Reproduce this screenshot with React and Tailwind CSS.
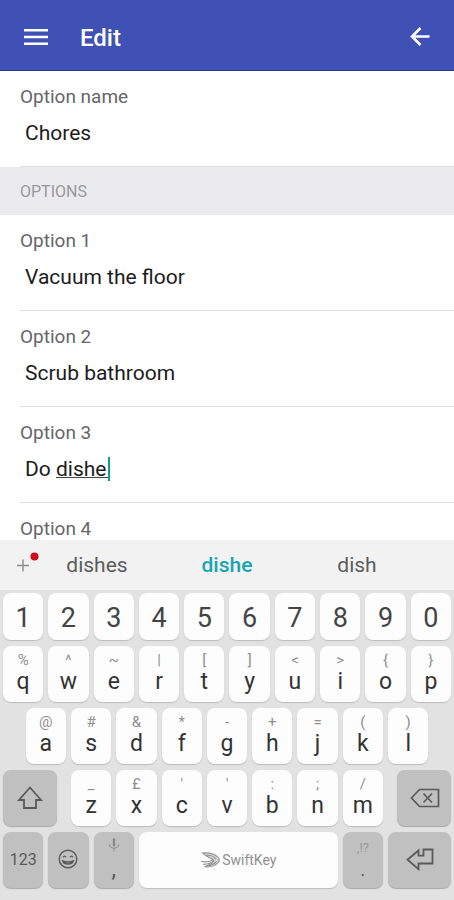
import { useState } from "react";
import clsx from "clsx";

const numberRow = ["1", "2", "3", "4", "5", "6", "7", "8", "9", "0"];

const topRow = [
  ["q", "%"],
  ["w", "^"],
  ["e", "~"],
  ["r", "|"],
  ["t", "["],
  ["y", "]"],
  ["u", "<"],
  ["i", ">"],
  ["o", "{"],
  ["p", "}"],
];

const homeRow = [
  ["a", "@"],
  ["s", "#"],
  ["d", "&"],
  ["f", "*"],
  ["g", "-"],
  ["h", "+"],
  ["j", "="],
  ["k", "("],
  ["l", ")"],
];

const bottomRow = [
  ["z", "_"],
  ["x", "£"],
  ["c", "'"],
  ["v", "'"],
  ["b", ":"],
  ["n", ";"],
  ["m", "/"],
];

function MenuIcon() {
  return (
    <svg className="h-6 w-6" viewBox="0 0 24 24" fill="currentColor">
      <path d="M0 4h24v2.4H0zM0 10.8h24v2.4H0zM0 17.6h24V20H0z" />
    </svg>
  );
}

function BackIcon() {
  return (
    <svg className="h-5 w-5" viewBox="0 0 20 20" fill="none" stroke="currentColor" strokeWidth="2.6">
      <path d="M19.5 9.5H2.5M10.5 1L2 9.5l8.5 8.5" />
    </svg>
  );
}

function ShiftIcon() {
  return (
    <svg className="h-6 w-7" viewBox="0 0 28 24" fill="none" stroke="currentColor" strokeWidth="1.8">
      <path d="M14 1.5L25 14h-5v8H8v-8H3z" />
    </svg>
  );
}

function BackspaceIcon() {
  return (
    <svg className="h-5 w-8" viewBox="0 0 32 20" fill="none" stroke="currentColor" strokeWidth="1.7">
      <path d="M11.5 1.5H30.5V18.5H11.5L3.5 10zM15.5 5.5l8.5 9M24 5.5l-8.5 9" />
    </svg>
  );
}

function EnterIcon() {
  return (
    <svg className="h-6 w-8" viewBox="0 0 32 24" fill="none" stroke="currentColor" strokeWidth="1.8">
      <path d="M3.5 12.8L14.5 3.5v5.2h5V2.5h9v14h-14v5.7z" />
    </svg>
  );
}

function SmileIcon() {
  return (
    <svg className="h-5 w-5" viewBox="0 0 20 20" fill="none" stroke="currentColor" strokeWidth="1.4">
      <circle cx="10" cy="10" r="8.8" />
      <path d="M5.2 8.2c.4-1.5 2.2-1.5 2.6 0M12.2 8.2c.4-1.5 2.2-1.5 2.6 0M4.8 12c2.6 1.3 7.8 1.3 10.4 0-1 4-9.4 4-10.4 0z" />
    </svg>
  );
}

function MicIcon() {
  return (
    <svg className="h-3.5 w-3" viewBox="0 0 12 14" fill="none" stroke="currentColor">
      <path d="M6 1.2v6" strokeWidth="2.4" strokeLinecap="round" />
      <path d="M1.2 6.4c.4 5 9.2 5 9.6 0M6 10.4V13.4" />
    </svg>
  );
}

function SwiftKeyLogo() {
  return (
    <svg className="h-4 w-5" viewBox="0 0 20 16" fill="none" stroke="currentColor" strokeWidth="1.1">
      <path
        d="M2.5 1C9 .5 15 2 18.2 5.5c1.4 1.7 1.4 3.3 0 5C15 14 9.5 15.3 4.5 14.8 9 13.5 12.5 11.5 13.500 8 10 5.5 5.5 4.5 2.5 1z"
        fill="currentColor"
        fillOpacity="0.3"
      />
      <path d="M6 3.3c5-.3 8.5 1.2 10.3 4.2M1 9.500c4 .8 8 .4 11.500-1.5M3 12.2c5 .3 8.500-1 11-3.500M8 13.8c4-.6 6.500-2 8.500-4.500" />
    </svg>
  );
}

function Field({ id, label, value, composing }) {
  const [text, setText] = useState(value);

  return (
    <div className="ml-5 border-b border-[#e0e0e2] pt-3.5 pb-[9px]">
      <label htmlFor={id} className="block text-[19px] leading-6 text-[#666]">
        {label}
      </label>
      <div className="relative">
        <input
          id={id}
          type="text"
          value={text}
          onChange={(e) => setText(e.target.value)}
          className="block h-12 w-full bg-transparent pl-[5px] text-[21px] text-[#1c1c1c] outline-none"
        />
        {/* Composing underline and caret */}
        {composing && text === value && (
          <div className="pointer-events-none absolute top-3 left-9 h-6 w-[54px] border-r-2 border-[#159a8c]">
            <div className="mt-5 h-px bg-[#444]" />
          </div>
        )}
      </div>
    </div>
  );
}

function Key({ children, label, dark, className }) {
  return (
    <button
      type="button"
      aria-label={label}
      className={clsx(
        "flex flex-col items-center justify-center rounded-lg",
        dark
          ? "bg-[#c0c0c0] text-[#5a5a5a] shadow-[0_1px_1px_#a8a8a8]"
          : "bg-[#fdfdfd] text-[#333] shadow-[0_1px_1px_#bdbdbd]",
        className
      )}
    >
      {children}
    </button>
  );
}

function LetterKey({ letter, hint, className }) {
  return (
    <Key className={clsx("col-span-2 pb-1", className)}>
      <span className="text-[15px] leading-5 text-[#909090]">{hint}</span>
      <span className="text-[23px] leading-6">{letter}</span>
    </Key>
  );
}

function Keyboard() {
  return (
    <div className="shrink-0 bg-[#e2e2e2] pb-3">
      {/* Suggestions */}
      <div className="mb-[3px] flex h-[50px] items-center bg-[#f2f2f2] pt-0.5 text-[21px] text-[#5c5c5c]">
        <button type="button" aria-label="Toolbar" className="ml-4 h-8 w-6">
          <svg className="h-8 w-6" viewBox="0 0 24 32" fill="none">
            <path d="M1 15.5h12M7 9.5v12" stroke="#8c8c8c" strokeWidth="1.4" />
            <circle cx="18.5" cy="6.5" r="4" fill="#cc0c1c" />
          </svg>
        </button>
        <div className="mr-8 -ml-2 grid flex-1 grid-cols-3">
          <button type="button">dishes</button>
          <button type="button" className="font-medium text-[#18a5b2]">
            dishe
          </button>
          <button type="button">dish</button>
        </div>
      </div>

      {/* Half-key columns, so that the rows can be staggered */}
      <div className="grid grid-cols-20 grid-rows-[47px_56px_56px_56px_56px] gap-x-[5px] gap-y-1.5 px-[3px]">
        {numberRow.map((n) => (
          <Key key={n} className="col-span-2 pt-0.5 text-[27px] leading-8">
            <span className="text-[#444]">{n}</span>
          </Key>
        ))}

        {topRow.map(([letter, hint]) => (
          <LetterKey key={letter} letter={letter} hint={hint} />
        ))}

        {homeRow.map(([letter, hint], i) => (
          <LetterKey
            key={letter}
            letter={letter}
            hint={hint}
            className={i === 0 && "col-start-2"}
          />
        ))}

        <Key dark label="Shift" className="col-span-3 col-start-1 mr-[9px]">
          <ShiftIcon />
        </Key>
        {bottomRow.map(([letter, hint]) => (
          <LetterKey key={letter} letter={letter} hint={hint} />
        ))}
        <Key dark label="Backspace" className="col-span-3 ml-[9px]">
          <BackspaceIcon />
        </Key>

        <Key dark className="col-span-2 text-[16px]">
          123
        </Key>
        <Key dark label="Emoji" className="col-span-2 pb-0.5">
          <SmileIcon />
        </Key>
        <Key dark className="col-span-2">
          <span className="flex h-5 items-start text-[#8a8a8a]">
            <MicIcon />
          </span>
          <span className="text-[23px] leading-6">,</span>
        </Key>
        <Key className="col-span-9">
          <span className="flex items-center gap-0.5 text-[14px] text-[#909090]">
            <SwiftKeyLogo />
            SwiftKey
          </span>
        </Key>
        <Key dark className="col-span-2">
          <span className="text-[13px] leading-5 text-[#999]">,!?</span>
          <span className="text-[18px] leading-6">.</span>
        </Key>
        <Key dark label="Enter" className="col-span-3 pb-0.5">
          <EnterIcon />
        </Key>
      </div>
    </div>
  );
}

function App() {
  return (
    <div className="flex h-screen flex-col bg-white font-[Roboto,sans-serif]">
      <header className="flex h-[71px] shrink-0 items-center border-b border-[#26369a] bg-[#3f51b5] px-6 pt-1 text-white">
        <button type="button" aria-label="Menu">
          <MenuIcon />
        </button>
        <h1 className="ml-8 flex-1 pt-0.5 text-[24px] font-medium">Edit</h1>
        <button type="button" aria-label="Back">
          <BackIcon />
        </button>
      </header>

      <form className="min-h-0 flex-1 overflow-hidden">
        <Field id="name" label="Option name" value="Chores" />
        <h2 className="flex h-12 items-center bg-[#ebebef] px-5 pt-0.5 text-[16px] text-[#98989c]">
          OPTIONS
        </h2>
        <Field id="option1" label="Option 1" value="Vacuum the floor" />
        <Field id="option2" label="Option 2" value="Scrub bathroom" />
        <Field id="option3" label="Option 3" value="Do dishe" composing />
        <Field id="option4" label="Option 4" value="" />
      </form>

      <Keyboard />
    </div>
  );
}

export default App;
